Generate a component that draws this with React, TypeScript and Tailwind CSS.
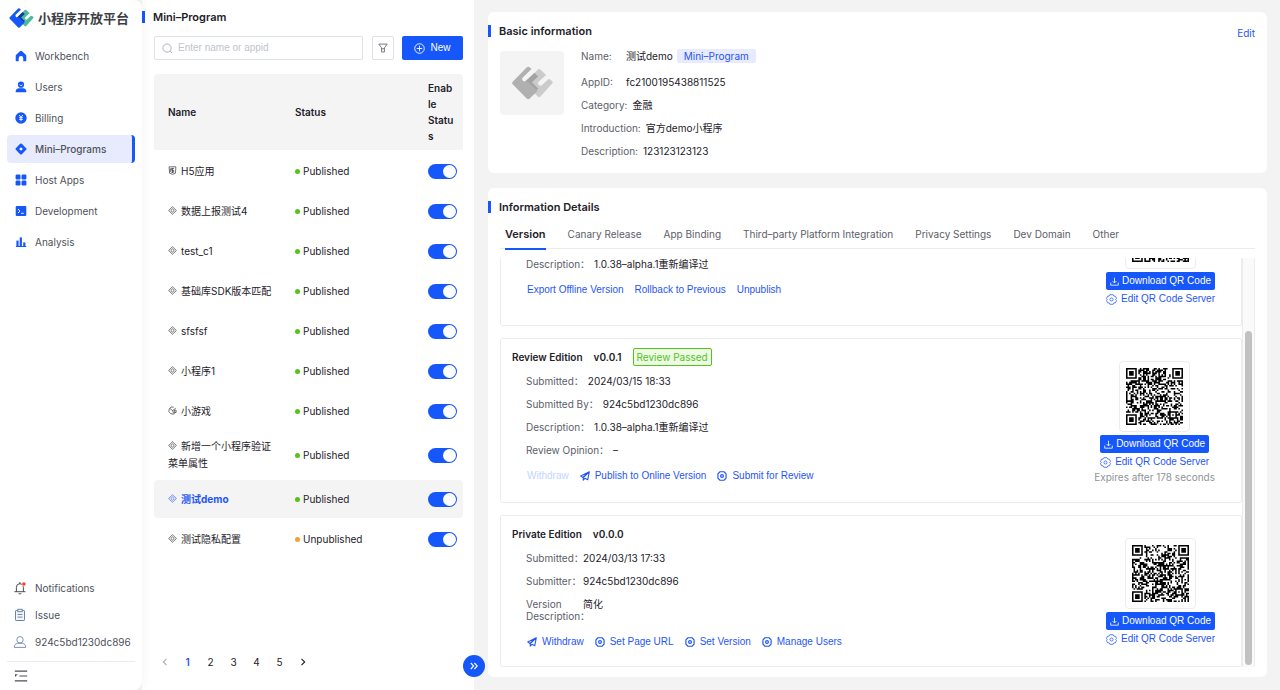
import { useState, type ReactNode } from "react";
import clsx from "clsx";

type IconProps = { className?: string };

type Program = {
  name: string;
  kind: "h5" | "mini" | "game";
  status: "Published" | "Unpublished";
  selected?: boolean;
};

const programs: Program[] = [
  { name: "H5应用", kind: "h5", status: "Published" },
  { name: "数据上报测试4", kind: "mini", status: "Published" },
  { name: "test_c1", kind: "mini", status: "Published" },
  { name: "基础库SDK版本匹配", kind: "mini", status: "Published" },
  { name: "sfsfsf", kind: "mini", status: "Published" },
  { name: "小程序1", kind: "mini", status: "Published" },
  { name: "小游戏", kind: "game", status: "Published" },
  { name: "新增一个小程序验证菜单属性", kind: "mini", status: "Published" },
  { name: "测试demo", kind: "mini", status: "Published", selected: true },
  { name: "测试隐私配置", kind: "mini", status: "Unpublished" },
];

const tabs = [
  "Version",
  "Canary Release",
  "App Binding",
  "Third–party Platform Integration",
  "Privacy Settings",
  "Dev Domain",
  "Other",
];

/* ---------- icons ---------- */

function Logo({ className, front, fold, back }: IconProps & { front: string; fold: string; back: string }) {
  return (
    <svg viewBox="0 0 124 102" className={className} aria-hidden="true">
      <path
        d="M78 10 Q82 7 86 10 L103 27 L80 48 Q77 52 81 56 Q86 61 91 57 L108 41 Q112 37 116 41 L121 45 Q125 49 121 53 L86 92 Q82 96 78 92 L40 54 Z"
        fill={back}
      />
      <path d="M38 48 L68 20 L79 31 L60 49 L79 68 L68 80 Z" fill={fold} />
      <path
        d="M45 3 Q49 0 53 3 L59 9 L32 35 Q29 40 33 44 Q37 48 42 46 L48 47 L77 75 L53 99 Q49 102 45 99 L2 55 Q-1 51 2 47 Z"
        fill={front}
      />
    </svg>
  );
}

function HomeIcon() {
  return (
    <svg viewBox="0 0 12 12" className="size-3" fill="currentColor" aria-hidden="true">
      <path d="M5.2 1.1a1.2 1.2 0 0 1 1.6 0l4 3.6c.3.3.5.6.5 1v4.6c0 .5-.3.9-.8.9H8.3V8.4a2.3 2.3 0 0 0-4.6 0v2.8H1.5a.8.8 0 0 1-.8-.9V5.7c0-.4.2-.7.5-1z" />
    </svg>
  );
}

function UserIcon() {
  return (
    <svg viewBox="0 0 12 12" className="size-3" aria-hidden="true">
      <circle cx="6" cy="3.7" r="3.1" fill="currentColor" />
      <path d="M.6 10.9c0-2.5 1.5-3.7 3.4-3.7h4c1.9 0 3.4 1.2 3.4 3.7 0 .3-.2.4-.4.4H1c-.2 0-.4-.1-.4-.4z" fill="currentColor" />
      <path d="M4.6 3.6a1.5 1.5 0 0 0 2.8 0" stroke="#fff" strokeWidth=".8" fill="none" />
    </svg>
  );
}

function BillingIcon() {
  return (
    <svg viewBox="0 0 12 12" className="size-3" aria-hidden="true">
      <circle cx="6" cy="6" r="5.7" fill="currentColor" />
      <path d="M4.2 3 6 5.3 7.8 3M6 5.3v3.9M4.2 5.7h3.6M4.2 7.4h3.6" stroke="#fff" strokeWidth=".9" fill="none" />
    </svg>
  );
}

function ProgramIcon() {
  return (
    <svg viewBox="0 0 12 12" className="size-3" aria-hidden="true">
      <path d="M5.2.8a1.2 1.2 0 0 1 1.6 0l4.4 4.4c.4.4.4 1.2 0 1.6l-4.4 4.4a1.2 1.2 0 0 1-1.6 0L.8 6.8a1.2 1.2 0 0 1 0-1.6z" fill="currentColor" />
      <path d="M6 4.2 7.8 6 6 7.8 4.2 6z" fill="#fff" />
    </svg>
  );
}

function AppsIcon() {
  return (
    <svg viewBox="0 0 12 12" className="size-3" fill="currentColor" aria-hidden="true">
      <rect x=".6" y=".6" width="4.9" height="4.9" rx="1.2" />
      <rect x="6.5" y=".6" width="4.9" height="4.9" rx="1.2" />
      <rect x=".6" y="6.5" width="4.9" height="4.9" rx="1.2" />
      <rect x="6.5" y="6.5" width="4.9" height="4.9" rx="1.2" />
    </svg>
  );
}

function TerminalIcon() {
  return (
    <svg viewBox="0 0 12 12" className="size-3" aria-hidden="true">
      <rect x=".7" y=".9" width="10.6" height="10.2" rx="1.1" fill="currentColor" />
      <path d="m3 4 2 2-2 2M6 8.3h2.8" stroke="#fff" strokeWidth=".9" fill="none" />
    </svg>
  );
}

function ChartIcon() {
  return (
    <svg viewBox="0 0 12 12" className="size-3" fill="currentColor" aria-hidden="true">
      <rect x="1.4" y="4.6" width="2.2" height="5.7" />
      <rect x="4.7" y="1.4" width="2.2" height="8.9" />
      <rect x="8.2" y="6.4" width="2.2" height="3.9" />
      <rect x=".9" y="10" width="10.3" height="1" />
    </svg>
  );
}

function BellIcon() {
  return (
    <svg viewBox="0 0 14 14" className="size-3.5" fill="none" aria-hidden="true">
      <path d="M3.4 10.5V6.2a3.5 3.5 0 0 1 7 0v4.3M1.8 10.7h10.2M6.9 2.7V1.4M5.7 12.3a1.3 1.3 0 0 0 2.4 0" stroke="#4b4f57" strokeLinecap="round" />
      <circle cx="10.9" cy="3" r="2.2" fill="#fff" />
      <circle cx="10.9" cy="3" r="1.8" fill="#ff3b30" />
    </svg>
  );
}

function IssueIcon() {
  return (
    <svg viewBox="0 0 14 14" className="size-3.5" fill="none" stroke="#6d83ab" aria-hidden="true">
      <rect x="2.5" y="2.5" width="9" height="10" rx=".6" fill="#f2f5fa" />
      <rect x="4.8" y="1.3" width="4.4" height="2.4" fill="#fff" />
      <path d="M4.6 6.5h4.8M4.6 9.1h4.8" />
    </svg>
  );
}

function AccountIcon() {
  return (
    <svg viewBox="0 0 14 14" className="size-3.5" fill="none" stroke="#7e92b8" aria-hidden="true">
      <circle cx="7" cy="4.8" r="3.2" />
      <path d="M1.2 12.4c0-2.2 1.2-3.5 3.3-4.1h5c2.1.6 3.3 1.9 3.3 4.1z" />
    </svg>
  );
}

function FoldIcon() {
  return (
    <svg viewBox="0 0 14 12" className="h-3 w-3.5" fill="none" stroke="#4b4f57" aria-hidden="true">
      <path d="M.8 1.2h12.4M5.4 6h7.8M.8 10.8h12.4" strokeWidth="1.2" />
      <path d="M1 4.3h2.8L1 7z" fill="#4b4f57" stroke="none" />
    </svg>
  );
}

function KindIcon({ kind }: { kind: Program["kind"] }) {
  return (
    <svg viewBox="0 0 10 10" className="mr-1 inline-block size-[9px] align-[0px]" fill="none" stroke="currentColor" strokeWidth=".7" aria-hidden="true">
      {kind === "mini" && (
        <>
          <path d="M5 .9 9.3 5 5 9.1.7 5z" />
          <path d="M5 3.2 6.9 5 5 6.8 3.1 5z" />
        </>
      )}
      {kind === "h5" && (
        <>
          <path d="M1.2.9h7.6L8.2 8.1 5 9.2 1.8 8.1z" />
          <path d="M6.8 2.7H3.6v2h2.8v2.2H3.4M2.6 2.7v4M5 2.7v5" />
        </>
      )}
      {kind === "game" && (
        <>
          <path d="M6.4 1.3A4 4 0 1 0 8.3 7.2" />
          <path d="M2.2 2.8 5 5l3.6-2.5M5 5l1.4 3.4M7 4.6h2v2.5H7z" />
        </>
      )}
    </svg>
  );
}

function SendIcon() {
  return (
    <svg viewBox="0 0 12 12" className="size-2.5" fill="none" stroke="currentColor" strokeWidth="1.3" strokeLinejoin="round" aria-hidden="true">
      <path d="M11.2.9.9 6.1l2.7 1.6zM11.2.9 3.9 7.8v3.1l2-2.1 3.4 1.6z" />
    </svg>
  );
}

function NutIcon({ thin }: { thin?: boolean }) {
  return thin ? (
    <svg viewBox="0 0 12 12" className="size-[11px]" fill="none" stroke="currentColor" strokeWidth=".8" aria-hidden="true">
      <path d="M4.2.8h3.6l.8 1.5 1.7.1L11.5 5l-.9 1 .9 1-1.2 2.6-1.7.1-.8 1.5H4.2l-.8-1.5-1.7-.1L.5 7l.9-1-.9-1 1.2-2.6 1.7-.1z" />
      <circle cx="6" cy="6" r="1.7" />
    </svg>
  ) : (
    <svg viewBox="0 0 12 12" className="size-2.5" fill="none" stroke="currentColor" strokeWidth="1.4" strokeLinejoin="round" aria-hidden="true">
      <path d="M3.6.9h4.8l2.5 2.5v5.2l-2.5 2.5H3.6L1.1 8.6V3.4z" />
      <circle cx="6" cy="6" r="1.7" />
    </svg>
  );
}

function DownloadIcon() {
  return (
    <svg viewBox="0 0 10 10" className="size-[9px]" fill="none" stroke="currentColor" strokeWidth=".9" aria-hidden="true">
      <path d="M5 .8v5.7M2.8 4.4 5 6.6l2.2-2.2M.8 6.2v2.9h8.4V6.2" />
    </svg>
  );
}

/* ---------- QR code ---------- */

const QR_SIZE = 37;

// modules are seeded so every render draws the same code
function qrPath(seed: number) {
  let state = seed;
  const next = () => {
    state = (state * 1103515245 + 12345) % 2147483648;
    return state / 2147483648;
  };
  const ring = (x: number, y: number, cx: number, cy: number, outer: number) => {
    const d = Math.max(Math.abs(x - cx), Math.abs(y - cy));
    if (d > outer) return null;
    return outer === 4 ? d === 3 || d <= 1 : d === 2 || d === 0;
  };
  let path = "";
  for (let y = 0; y < QR_SIZE; y++) {
    for (let x = 0; x < QR_SIZE; x++) {
      const random = next() > 0.5;
      const fixed =
        ring(x, y, 3, 3, 4) ?? ring(x, y, 33, 3, 4) ?? ring(x, y, 3, 33, 4) ?? ring(x, y, 30, 30, 2);
      if (fixed ?? random) path += `M${x} ${y}h1v1h-1z`;
    }
  }
  return path;
}

function QrBlock({ seed, expires }: { seed: number; expires?: string }) {
  return (
    <div className="mt-[17px] flex shrink-0 flex-col items-center self-start">
      <div className="flex size-[71px] items-center justify-center rounded border border-[#ececee] bg-white">
        <svg viewBox={`0 0 ${QR_SIZE} ${QR_SIZE}`} className="size-[57px]" role="img" aria-label="QR code">
          <path d={qrPath(seed)} fill="#000" />
        </svg>
      </div>
      <button className="mt-[3px] flex h-[18px] items-center gap-[3px] rounded-xs bg-[#1557fa] px-1 font-['Liberation_Sans',sans-serif] text-white">
        <DownloadIcon />
        Download QR Code
      </button>
      <a href="#server" className="flex h-[18px] items-center gap-1 font-['Liberation_Sans',sans-serif] text-[#1f55f5]">
        <NutIcon thin />
        Edit QR Code Server
      </a>
      {expires && <p className="leading-3 text-[#909399]">{expires}</p>}
    </div>
  );
}

/* ---------- building blocks ---------- */

function SectionTitle({ children }: { children: ReactNode }) {
  return (
    <div className="flex h-3 items-center gap-2">
      <span className="h-3 w-[3px] bg-[#1557fa]" />
      <h2 className="text-[11px] leading-3 font-semibold text-[#1d2129]">{children}</h2>
    </div>
  );
}

function NavItem({ icon, label, active }: { icon: ReactNode; label: string; active?: boolean }) {
  return (
    <a
      href="#nav"
      className={clsx(
        "flex h-7 items-center gap-2 rounded-sm pl-2",
        active ? "border-r-[3px] border-[#1557fa] bg-[#e8ebfd] font-medium" : ""
      )}>
      <span className="text-[#1557fa]">{icon}</span>
      {label}
    </a>
  );
}

function InfoRow({ label, children }: { label: string; children: ReactNode }) {
  return (
    <div className="flex h-[23px] items-center gap-[5px]">
      <dt className="min-w-10 text-[#5c6068]">{label}</dt>
      <dd className="flex items-center text-[#1d2129]">{children}</dd>
    </div>
  );
}

function VersionCard({
  title,
  version,
  tag,
  rows,
  narrowLabels,
  height,
  actions,
  qrSeed,
  expires,
}: {
  title?: string;
  version?: string;
  tag?: string;
  rows: [string, string][];
  narrowLabels?: boolean;
  height: string;
  actions: ReactNode;
  qrSeed: number;
  expires?: string;
}) {
  return (
    <article className={clsx("flex shrink-0 justify-between rounded-xs border border-[#ececee] pt-[5px] pr-[26px] pl-[11px]", height)}>
      <div className={clsx(!title && "mt-auto pb-5")}>
        {title && (
          <header className="flex h-[25px] items-center gap-[11px] font-semibold text-[#1d2129]">
            <h3>{title}</h3>
            <span>{version}</span>
            {tag && (
              <span className="flex h-[18px] items-center rounded-xs border border-[#52c41a] bg-[#eefae6] px-[3px] font-normal text-[#52c41a]">
                {tag}
              </span>
            )}
          </header>
        )}
        <dl className="pl-3.5">
          {rows.map(([label, value]) => (
            <div key={label} className={clsx("flex pt-1.5 pb-[5px] leading-3", !narrowLabels && "gap-1")}>
              <dt className={clsx("text-[#5c6068]", narrowLabels && "w-[57px]")}>{label}：</dt>
              <dd className="text-[#1d2129]">{value}</dd>
            </div>
          ))}
        </dl>
        <div className="flex h-[30px] items-center gap-[11px] pl-[15px] font-['Liberation_Sans',sans-serif] text-[#1f55f5]">
          {actions}
        </div>
      </div>
      <QrBlock seed={qrSeed} expires={expires} />
    </article>
  );
}

function Action({ icon, disabled, children }: { icon?: ReactNode; disabled?: boolean; children: ReactNode }) {
  return (
    <button disabled={disabled} className="flex items-center gap-[5px] disabled:text-[#c5d5ff]">
      {icon}
      {children}
    </button>
  );
}

/* ---------- page ---------- */

function Sidebar() {
  return (
    <aside className="relative z-10 flex w-[142px] shrink-0 flex-col rounded-r-lg bg-white px-[7px] text-[#4e5259] shadow-[2px_0_10px_rgba(0,0,0,0.04)]">
      <div className="flex h-9 items-center gap-1 pl-0.5">
        <Logo className="h-5 w-[25px]" front="#1557fa" fold="#0f3c9c" back="#4fb9a0" />
        <span className="text-[13px] font-bold whitespace-nowrap text-[#3c3f45]">小程序开放平台</span>
      </div>
      <nav className="mt-1.5 flex flex-col gap-[3px]">
        <NavItem icon={<HomeIcon />} label="Workbench" />
        <NavItem icon={<UserIcon />} label="Users" />
        <NavItem icon={<BillingIcon />} label="Billing" />
        <NavItem icon={<ProgramIcon />} label="Mini–Programs" active />
        <NavItem icon={<AppsIcon />} label="Host Apps" />
        <NavItem icon={<TerminalIcon />} label="Development" />
        <NavItem icon={<ChartIcon />} label="Analysis" />
      </nav>
      <div className="mt-auto flex flex-col border-b border-[#ececee] pb-1.5">
        {[
          { icon: <BellIcon />, label: "Notifications" },
          { icon: <IssueIcon />, label: "Issue" },
          { icon: <AccountIcon />, label: "924c5bd1230dc896" },
        ].map((item) => (
          <a key={item.label} href="#account" className="flex h-[27px] items-center gap-2 pl-1.5">
            {item.icon}
            {item.label}
          </a>
        ))}
      </div>
      <button className="flex h-7 items-center pl-[7px]" aria-label="Collapse menu">
        <FoldIcon />
      </button>
    </aside>
  );
}

function ProgramList() {
  return (
    <section className="relative flex w-[332px] shrink-0 flex-col bg-white pt-[11px] pr-[11px]">
      <SectionTitle>Mini–Program</SectionTitle>
      <div className="mt-[13px] flex h-6 pl-3">
        <label className="flex flex-1 items-center gap-[5px] rounded-xs border border-[#dfe1e8] px-[7px]">
          <svg viewBox="0 0 12 12" className="size-[11px]" fill="none" stroke="#a9adb5" aria-hidden="true">
            <circle cx="5.5" cy="5.5" r="4.5" />
            <path d="m9 9 2 2" />
          </svg>
          <input
            aria-label="Search"
            placeholder="Enter name or appid"
            className="min-w-0 flex-1 font-['Liberation_Sans',sans-serif] outline-none placeholder:text-[#c0c4cc]"
          />
        </label>
        <button aria-label="Filter" className="ml-[9px] flex w-[22px] items-center justify-center rounded-xs border border-[#dfe1e8]">
          <svg viewBox="0 0 12 12" className="size-2.5" fill="none" stroke="#6b6f76" strokeWidth="1.1" aria-hidden="true">
            <path d="M1 1.3h10L7.7 5.8v5H4.3v-5zM4.3 6.9h3.4" />
          </svg>
        </button>
        <button className="ml-2 flex w-[61px] items-center justify-center gap-[5px] rounded-xs bg-[#1557fa] font-['Liberation_Sans',sans-serif] font-medium text-white">
          <svg viewBox="0 0 12 12" className="size-[11px]" fill="none" stroke="currentColor" aria-hidden="true">
            <circle cx="6" cy="6" r="5.2" />
            <path d="M6 3v6M3 6h6" />
          </svg>
          New
        </button>
      </div>

      <div className="mt-3 pl-3">
        <table className="w-full table-fixed border-separate border-spacing-x-0 border-spacing-y-0.5 text-left">
          <thead>
            <tr className="h-[76px] text-[#1d2129] *:bg-[#f4f4f5] *:font-semibold">
              <th className="w-[127px] rounded-tl-sm pl-3.5">Name</th>
              <th className="pl-3.5">Status</th>
              <th className="w-[49px] rounded-tr-sm pr-[9px] pl-3.5 leading-4 wrap-break-word">Enable Status</th>
            </tr>
          </thead>
          <tbody className="text-[#1d2129]">
            {programs.map((p) => (
              <tr key={p.name} className={clsx("h-[38px]", p.selected && "*:bg-[#f4f4f5]")}>
                <td className={clsx("rounded-l-sm py-1.5 pr-2 pl-3.5 leading-[17px]", p.selected && "font-bold text-[#1f55f5]")}>
                  <KindIcon kind={p.kind} />
                  {p.name}
                </td>
                <td className="pl-3.5">
                  <span className="flex items-center gap-[3px]">
                    <span className={clsx("size-[5px] rounded-full", p.status === "Published" ? "bg-[#52c41a]" : "bg-[#f5a031]")} />
                    {p.status}
                  </span>
                </td>
                <td className="rounded-r-sm pl-3.5">
                  <input
                    type="checkbox"
                    role="switch"
                    defaultChecked
                    aria-label={`Enable ${p.name}`}
                    className="flex h-[15px] w-[29px] appearance-none items-center rounded-full bg-[#c9cdd4] p-px before:size-[13px] before:rounded-full before:bg-white checked:justify-end checked:bg-[#1557fa]"
                  />
                </td>
              </tr>
            ))}
          </tbody>
        </table>
      </div>

      <nav aria-label="Pagination" className="mt-auto mb-[18px] flex h-5 items-center pl-[11px] *:flex *:w-[23px] *:justify-center">
        <button aria-label="Previous page" disabled>
          <svg viewBox="0 0 8 8" className="size-2" fill="none" stroke="#a9adb5" strokeWidth="1.1" aria-hidden="true">
            <path d="M5.5.8 2.3 4l3.2 3.2" />
          </svg>
        </button>
        <button className="font-semibold text-[#1f55f5]">1</button>
        <button>2</button>
        <button>3</button>
        <button>4</button>
        <button>5</button>
        <button aria-label="Next page">
          <svg viewBox="0 0 8 8" className="size-2" fill="none" stroke="#1d2129" strokeWidth="1.1" aria-hidden="true">
            <path d="M2.5.8 5.7 4 2.5 7.2" />
          </svg>
        </button>
      </nav>

      <button
        aria-label="Expand list"
        className="absolute right-0 bottom-[13px] z-10 flex size-[22px] translate-x-1/2 items-center justify-center rounded-full bg-[#1557fa]">
        <svg viewBox="0 0 8 8" className="size-2" fill="none" stroke="#fff" strokeWidth="1.1" aria-hidden="true">
          <path d="M.8 1 3.6 4 .8 7M4.4 1l2.8 3-2.8 3" />
        </svg>
      </button>
    </section>
  );
}

function BasicInformation() {
  return (
    <section className="rounded-md bg-white pt-[13px] pb-[11px]">
      <div className="flex items-start justify-between pr-3">
        <SectionTitle>Basic information</SectionTitle>
        <a href="#edit" className="text-[#1f55f5]">
          Edit
        </a>
      </div>
      <div className="mt-px flex gap-[17px] pl-3">
        <div className="mt-[9px] flex size-16 items-center justify-center rounded-sm bg-[#f4f4f5]">
          <Logo className="h-[34px] w-[41px]" front="#b0b0b0" fold="#a3a3a3" back="#cbcbcb" />
        </div>
        <dl>
          <div className="flex h-7 items-center gap-[5px]">
            <dt className="min-w-10 text-[#5c6068]">Name:</dt>
            <dd className="flex items-center gap-1 text-[#1d2129]">
              测试demo
              <span className="flex h-3.5 items-center rounded-xs bg-[#e8ebfd] px-[7px] text-[#1f55f5]">Mini–Program</span>
            </dd>
          </div>
          <InfoRow label="AppID:">fc2100195438811525</InfoRow>
          <InfoRow label="Category:">金融</InfoRow>
          <InfoRow label="Introduction:">官方demo小程序</InfoRow>
          <InfoRow label="Description:">123123123123</InfoRow>
        </dl>
      </div>
    </section>
  );
}

function InformationDetails() {
  const [tab, setTab] = useState("Version");

  return (
    <section className="flex min-h-0 flex-1 flex-col rounded-md bg-white pt-[13px] pb-2.5">
      <SectionTitle>Information Details</SectionTitle>
      <div role="tablist" className="mx-3 mt-[7px] flex h-[29px] gap-[22px] border-b border-[#ececee] pl-[5px] text-[#5c6068]">
        {tabs.map((name) => (
          <button
            key={name}
            role="tab"
            aria-selected={tab === name}
            onClick={() => setTab(name)}
            className={clsx(
              "-mb-px h-[30px] border-b-2",
              tab === name ? "border-[#1557fa] text-[11px] font-semibold text-[#1d2129]" : "border-transparent"
            )}>
            {name}
          </button>
        ))}
      </div>

      <div className="mx-3 mt-[9px] flex min-h-0 flex-1">
        {/* the list sits at its end, the first card runs out at the top */}
        <div className="flex min-w-0 flex-1 flex-col justify-end gap-3 overflow-hidden">
          <VersionCard
            rows={[["Description", "1.0.38–alpha.1重新编译过"]]}
            height="min-h-[151px]"
            qrSeed={77}
            actions={
              <>
                <Action>Export Offline Version</Action>
                <Action>Rollback to Previous</Action>
                <Action>Unpublish</Action>
              </>
            }
          />
          <VersionCard
            title="Review Edition"
            version="v0.0.1"
            tag="Review Passed"
            rows={[
              ["Submitted", "2024/03/15 18:33"],
              ["Submitted By", "924c5bd1230dc896"],
              ["Description", "1.0.38–alpha.1重新编译过"],
              ["Review Opinion", "–"],
            ]}
            height="min-h-[165px]"
            qrSeed={4021}
            expires="Expires after 178 seconds"
            actions={
              <>
                <Action disabled>Withdraw</Action>
                <Action icon={<SendIcon />}>Publish to Online Version</Action>
                <Action icon={<NutIcon />}>Submit for Review</Action>
              </>
            }
          />
          <VersionCard
            title="Private Edition"
            version="v0.0.0"
            rows={[
              ["Submitted", "2024/03/13 17:33"],
              ["Submitter", "924c5bd1230dc896"],
              ["Version Description", "简化"],
            ]}
            narrowLabels
            height="min-h-[152px]"
            qrSeed={918273}
            actions={
              <>
                <Action icon={<SendIcon />}>Withdraw</Action>
                <Action icon={<NutIcon />}>Set Page URL</Action>
                <Action icon={<NutIcon />}>Set Version</Action>
                <Action icon={<NutIcon />}>Manage Users</Action>
              </>
            }
          />
        </div>
        <div className="flex w-[13px] flex-col items-center justify-end border-x border-[#ececee] bg-[#fafafa] pb-0.5">
          <span className="h-[82%] w-[7px] rounded-full bg-[#c1c1c1]" />
        </div>
      </div>
    </section>
  );
}

export default function App() {
  return (
    <div className="flex h-screen bg-[#f3f3f3] font-[Inter,'Noto_Sans_CJK_SC',sans-serif] text-[10px] leading-4 text-[#1d2129]">
      <Sidebar />
      <ProgramList />
      <main className="flex min-w-0 flex-1 flex-col gap-[15px] pt-3 pr-[13px] pb-[13px] pl-3.5">
        <BasicInformation />
        <InformationDetails />
      </main>
    </div>
  );
}
